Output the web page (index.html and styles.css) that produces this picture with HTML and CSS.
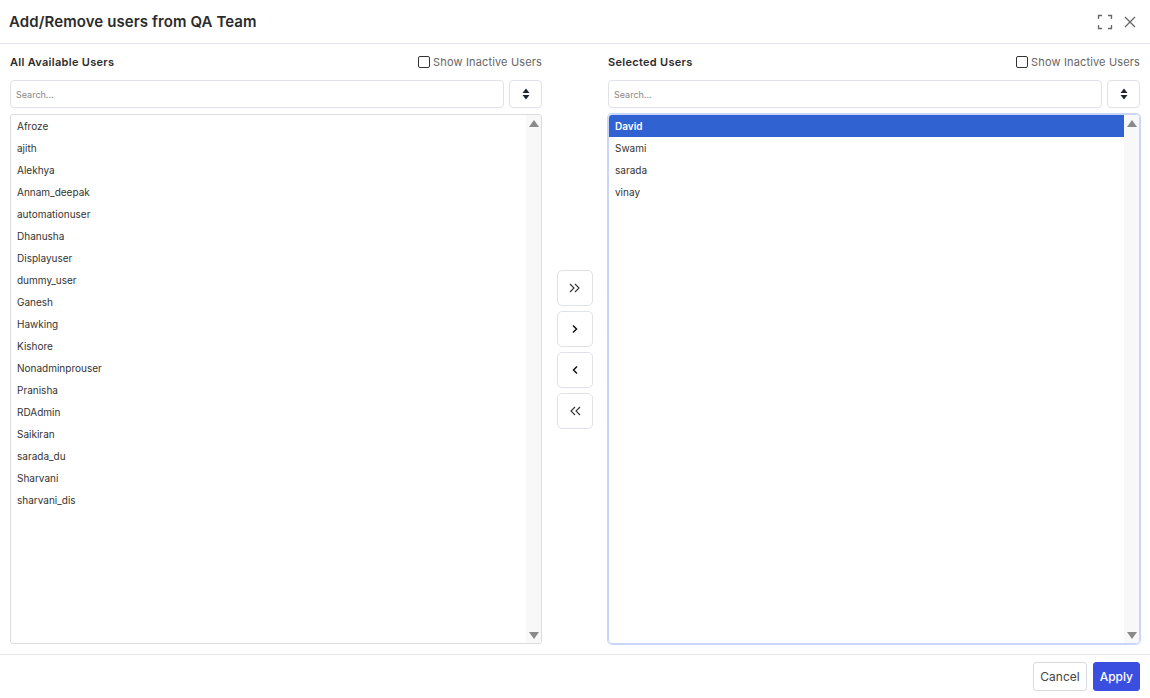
FILE: index.html
```html
<!DOCTYPE html>
<html lang="en">
  <head>
    <meta charset="UTF-8" />
    <meta name="viewport" content="width=device-width, initial-scale=1.0" />
    <title>Add/Remove users</title>
    <link rel="stylesheet" href="styles.css">
  </head>
  <body>
    <div class="dialog">
      <header class="dialog_header">
        <h1>Add/Remove users from QA Team</h1>
        <div class="header_icons">
          <svg width="16" height="16" viewBox="0 0 16 16" fill="none" stroke="#666" stroke-width="1.3">
            <path d="M1.5 5V1.5H5M11 1.5h3.5V5M14.5 11v3.5H11M5 14.5H1.5V11" />
          </svg>
          <svg width="14" height="14" viewBox="0 0 14 14" fill="none" stroke="#666" stroke-width="1.3">
            <path d="M2 2l10 10M12 2L2 12" />
          </svg>
        </div>
      </header>

      <section class="dialog_body">
        <div class="user_col">
          <div class="col_head">
            <h2>All Available Users</h2>
            <label class="inactive"><input type="checkbox" /> Show Inactive Users</label>
          </div>
          <div class="search_row">
            <input type="text" class="search" placeholder="Search..." />
            <button class="sort_btn">
              <svg width="8" height="12" viewBox="0 0 8 12"><path d="M4 0.5L7.5 5H0.5z M4 11.5L0.5 7H7.5z" fill="#1d2433" /></svg>
            </button>
          </div>
          <div class="user_list">
            <ul>
              <li>Afroze</li>
              <li>ajith</li>
              <li>Alekhya</li>
              <li>Annam_deepak</li>
              <li>automationuser</li>
              <li>Dhanusha</li>
              <li>Displayuser</li>
              <li>dummy_user</li>
              <li>Ganesh</li>
              <li>Hawking</li>
              <li>Kishore</li>
              <li>Nonadminprouser</li>
              <li>Pranisha</li>
              <li>RDAdmin</li>
              <li>Saikiran</li>
              <li>sarada_du</li>
              <li>Sharvani</li>
              <li>sharvani_dis</li>
            </ul>
            <div class="scrollbar">
              <span class="arrow up"></span>
              <span class="arrow down"></span>
            </div>
          </div>
        </div>

        <div class="move_col">
          <button class="move_btn">
            <svg width="14" height="10" viewBox="0 0 14 10" fill="none" stroke="#333" stroke-width="1.1"><path d="M2 1l4 4-4 4M7 1l4 4-4 4" /></svg>
          </button>
          <button class="move_btn">
            <svg width="10" height="10" viewBox="0 0 10 10" fill="none" stroke="#111" stroke-width="1.5"><path d="M3 1.5l3.5 3.5L3 8.5" /></svg>
          </button>
          <button class="move_btn">
            <svg width="10" height="10" viewBox="0 0 10 10" fill="none" stroke="#111" stroke-width="1.5"><path d="M7 1.5L3.5 5 7 8.5" /></svg>
          </button>
          <button class="move_btn">
            <svg width="14" height="10" viewBox="0 0 14 10" fill="none" stroke="#333" stroke-width="1.1"><path d="M7 1L3 5l4 4M12 1L8 5l4 4" /></svg>
          </button>
        </div>

        <div class="user_col">
          <div class="col_head">
            <h2>Selected Users</h2>
            <label class="inactive"><input type="checkbox" /> Show Inactive Users</label>
          </div>
          <div class="search_row">
            <input type="text" class="search" placeholder="Search..." />
            <button class="sort_btn">
              <svg width="8" height="12" viewBox="0 0 8 12"><path d="M4 0.5L7.5 5H0.5z M4 11.5L0.5 7H7.5z" fill="#1d2433" /></svg>
            </button>
          </div>
          <div class="user_list focused">
            <ul>
              <li class="selected">David</li>
              <li>Swami</li>
              <li>sarada</li>
              <li>vinay</li>
            </ul>
            <div class="scrollbar">
              <span class="arrow up"></span>
              <span class="arrow down"></span>
            </div>
          </div>
        </div>
      </section>

      <footer class="dialog_footer">
        <button class="btn cancel">Cancel</button>
        <button class="btn apply">Apply</button>
      </footer>
    </div>
  </body>
</html>
```

FILE: styles.css
```css
* {
  box-sizing: border-box;
}
body {
  margin: 0;
  font-family: Inter, "Noto Sans", sans-serif;
  color: #333;
  background: #fff;
}
.dialog {
  width: 1150px;
  height: 698px;
  display: flex;
  flex-direction: column;
}
.dialog_header {
  height: 44px;
  flex-shrink: 0;
  display: flex;
  align-items: center;
  justify-content: space-between;
  padding: 0 13px 0 9px;
  border-bottom: 1px solid #e3e6ea;
}
.dialog_header h1 {
  margin: 0;
  font-size: 15px;
  font-weight: 600;
  color: #2b2b2b;
  letter-spacing: 0.1px;
}
.header_icons {
  display: flex;
  align-items: center;
  gap: 10px;
}
.dialog_body {
  flex: 1;
  display: flex;
  padding: 8px 10px 10px;
  border-bottom: 1px solid #e3e6ea;
}
.user_col {
  width: 532px;
  display: flex;
  flex-direction: column;
}
.col_head {
  height: 20px;
  display: flex;
  align-items: center;
  justify-content: space-between;
}
.col_head h2 {
  margin: 0;
  font-size: 11px;
  font-weight: 600;
  color: #2b2b2b;
  letter-spacing: 0.3px;
}
.inactive {
  display: flex;
  align-items: center;
  gap: 3px;
  font-size: 11px;
  color: #666;
  letter-spacing: 0.15px;
  cursor: pointer;
}
.inactive input {
  margin: 0;
  width: 12px;
  height: 12px;
  appearance: none;
  border: 1px solid #333;
  border-radius: 2px;
  background: #fff;
}
.search_row {
  display: flex;
  gap: 5px;
  margin-top: 8px;
  height: 28px;
}
.search {
  flex: 1;
  height: 28px;
  border: 1px solid #dfe2e8;
  border-radius: 4px;
  padding: 0 5px;
  font-family: inherit;
  font-size: 9px;
  outline: none;
}
.search::placeholder {
  color: #888;
}
.sort_btn {
  width: 33px;
  height: 28px;
  border: 1px solid #dfe2e8;
  border-radius: 4px;
  background: #fff;
  display: flex;
  align-items: center;
  justify-content: center;
  padding: 0;
}
.user_list {
  flex: 1;
  margin-top: 6px;
  display: flex;
  border: 1px solid #dcdcdc;
  border-radius: 3px;
  overflow: hidden;
}
.user_list.focused {
  border-color: #c9d6f7;
  box-shadow: 0 0 0 1px #c9d6f7;
  border-radius: 4px;
}
.user_list ul {
  flex: 1;
  margin: 0;
  padding: 0;
  list-style: none;
}
.user_list li {
  height: 22px;
  line-height: 22px;
  padding-left: 6px;
  font-size: 10px;
  color: #333;
}
.user_list li.selected {
  background: #3162d1;
  color: #fff;
  font-weight: 600;
}
.scrollbar {
  width: 15px;
  background: #f8f8f8;
  display: flex;
  flex-direction: column;
  justify-content: space-between;
  align-items: center;
  padding: 5px 0 4px;
}
.arrow {
  width: 0;
  height: 0;
  border-left: 5px solid transparent;
  border-right: 5px solid transparent;
}
.arrow.up {
  border-bottom: 7px solid #8a8a8a;
}
.arrow.down {
  border-top: 7px solid #8a8a8a;
}
.move_col {
  width: 66px;
  display: flex;
  flex-direction: column;
  align-items: center;
  justify-content: center;
  gap: 5px;
  padding-top: 2px;
}
.move_btn {
  width: 36px;
  height: 36px;
  border: 1px solid #dfe2e8;
  border-radius: 5px;
  background: #fff;
  display: flex;
  align-items: center;
  justify-content: center;
  padding: 0;
}
.dialog_footer {
  height: 43px;
  flex-shrink: 0;
  display: flex;
  align-items: center;
  justify-content: flex-end;
  gap: 6px;
  padding: 0 10px 0 0;
}
.btn {
  height: 29px;
  border-radius: 3px;
  font-family: inherit;
  font-size: 12px;
  padding: 0 6px;
  cursor: pointer;
}
.btn.cancel {
  background: #fff;
  border: 1px solid #d6d9de;
  color: #444;
}
.btn.apply {
  background: #3a4fe0;
  border: 1px solid #3a4fe0;
  color: #fff;
  font-weight: 500;
}
```
